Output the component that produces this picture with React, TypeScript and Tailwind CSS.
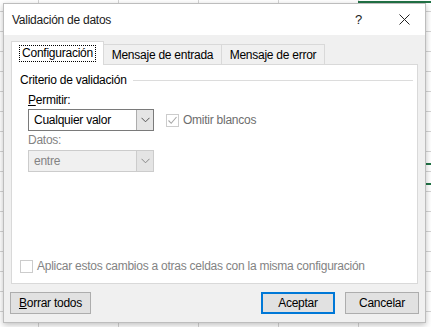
import React from "react";

const font = { fontFamily: '"Liberation Sans", Arial, sans-serif' };

function SheetGrid() {
  const cols = [38, 118, 198, 278, 358];
  const rows = Array.from({ length: 17 }, (_, i) => 11 + i * 20);
  return (
    <svg className="absolute inset-0" width="431" height="327">
      <rect width="431" height="327" fill="#ffffff" />
      {cols.map((x) => (
        <line key={"c" + x} x1={x + 0.5} y1="0" x2={x + 0.5} y2="327" stroke="#d4d4d4" />
      ))}
      {rows.map((y) => (
        <line key={"r" + y} x1="0" y1={y + 0.5} x2="431" y2={y + 0.5} stroke="#d4d4d4" />
      ))}
      <rect x="358" y="1" width="73" height="2" fill="#217346" />
      <rect x="424" y="163" width="7" height="2" fill="#217346" />
      <rect x="424" y="183" width="7" height="2" fill="#217346" />
    </svg>
  );
}

function Chevron({ color = "#444" }: { color?: string }) {
  return (
    <svg width="9" height="6" viewBox="0 0 9 6">
      <path d="M0.5 0.8 L4.5 4.8 L8.5 0.8" fill="none" stroke={color} strokeWidth="1" />
    </svg>
  );
}

function Select({ value, disabled }: { value: string; disabled?: boolean }) {
  return (
    <div
      className={
        "flex h-[22px] w-[126px] border " +
        (disabled ? "border-[#cccccc] bg-[#f0f0f0]" : "border-[#7a7a7a] bg-white")
      }
    >
      <div className={"flex-1 pl-[5px] leading-[20px] " + (disabled ? "text-[#838383]" : "text-black")}>
        {value}
      </div>
      <div
        className={
          "flex w-[17px] items-center justify-center border-l " +
          (disabled ? "border-[#cccccc] bg-[#e4e4e4]" : "border-[#adadad] bg-[#e5e5e5]")
        }
      >
        <Chevron color={disabled ? "#888" : "#555"} />
      </div>
    </div>
  );
}

function CheckBox({ checked }: { checked?: boolean }) {
  return (
    <div className="flex h-[13px] w-[13px] shrink-0 items-center justify-center border border-[#cccccc] bg-white">
      {checked && (
        <svg width="11" height="11" viewBox="0 0 11 11">
          <path d="M1.5 5.5 L4.2 8.3 L9.5 2" fill="none" stroke="#a8a8a8" strokeWidth="1.1" />
        </svg>
      )}
    </div>
  );
}

export default function App() {
  return (
    <div
      className="relative h-[327px] w-[431px] overflow-hidden text-[12px] leading-[14px] tracking-[-0.25px]"
      style={font}
    >
      <SheetGrid />
      <div className="absolute left-[3px] top-[3px] flex h-[320px] w-[423px] flex-col border border-[#bdbdbd] bg-[#f0f0f0] shadow-[0_2px_6px_rgba(0,0,0,0.25)]">
        <div className="flex h-[31px] items-center bg-white pl-[8px]">
          <span className="text-[#1a1a1a]">Validación de datos</span>
          <span className="ml-auto mr-[37px] text-[13px] text-[#222]">?</span>
          <svg className="mr-[15px]" width="11" height="11" viewBox="0 0 11 11">
            <path d="M0.5 0.5 L10.5 10.5 M10.5 0.5 L0.5 10.5" stroke="#222" strokeWidth="1" />
          </svg>
        </div>

        <div className="flex flex-col px-[7px] pt-[6px]">
          <div className="flex items-end">
            <div className="relative z-10 -mb-px flex h-[24px] w-[93px] items-center justify-center border border-b-0 border-[#d9d9d9] bg-white">
              <span className="border border-dotted border-black px-[2px] leading-[15px]">Configuración</span>
            </div>
            <div className="flex h-[20px] w-[118px] items-center justify-center border border-b-0 border-l-0 border-[#d9d9d9] bg-[#f0f0f0]">
              Mensaje de entrada
            </div>
            <div className="flex h-[20px] w-[103px] items-center justify-center border border-b-0 border-l-0 border-[#d9d9d9] bg-[#f0f0f0]">
              Mensaje de error
            </div>
          </div>

          <div className="flex h-[220px] flex-col border border-[#d9d9d9] bg-white pl-[8px] pr-[4px] pt-[8px]">
            <div className="flex items-center">
              <span>Criterio de validación</span>
              <div className="ml-[6px] h-px flex-1 bg-[#dcdcdc]" />
            </div>
            <div className="pl-[8px]">
              <div className="mt-[6px]">
                <span className="underline">P</span>ermitir:
              </div>
              <div className="mt-[2px] flex items-center">
                <Select value="Cualquier valor" />
                <div className="ml-[12px] flex items-center gap-[4px] text-[#6d6d6d]">
                  <CheckBox checked />
                  <span>Omitir blancos</span>
                </div>
              </div>
              <div className="mt-[2px] text-[#838383]">Datos:</div>
              <div className="mt-[3px]">
                <Select value="entre" disabled />
              </div>
            </div>
            <div className="mt-auto mb-[10px] flex items-center gap-[4px] text-[#838383]">
              <CheckBox />
              <span>Aplicar estos cambios a otras celdas con la misma configuración</span>
            </div>
          </div>
        </div>

        <div className="flex px-[6px] pt-[8px]">
          <button className="h-[22px] w-[81px] border border-[#adadad] bg-[#e1e1e1] text-black">
            <span className="underline">B</span>orrar todos
          </button>
          <button className="ml-auto h-[22px] w-[74px] border-2 border-[#0078d7] bg-[#e1e1e1] text-black">
            Aceptar
          </button>
          <button className="ml-[10px] h-[22px] w-[74px] border border-[#adadad] bg-[#e1e1e1] text-black">
            Cancelar
          </button>
        </div>
      </div>
    </div>
  );
}
